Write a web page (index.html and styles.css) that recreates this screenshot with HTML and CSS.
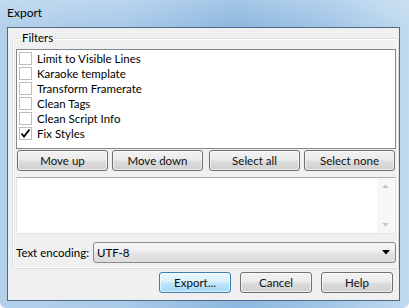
FILE: index.html
```html
<!DOCTYPE html>
<html>
<head>
    <title>Export</title>
    <link rel="stylesheet" href="styles.css">
</head>
<body>
    <div class="window">
        <div class="titlebar">Export</div>
        <div class="client">
            <fieldset class="filters">
                <legend>Filters</legend>
                <ul class="checklist">
                    <li><span class="check"></span>Limit to Visible Lines</li>
                    <li><span class="check"></span>Karaoke template</li>
                    <li><span class="check"></span>Transform Framerate</li>
                    <li><span class="check"></span>Clean Tags</li>
                    <li><span class="check"></span>Clean Script Info</li>
                    <li><span class="check"><svg width="11" height="11" viewBox="0 0 11 11"><path d="M1.5 5.5 L4 8.5 L9.5 1.5" fill="none" stroke="#000" stroke-width="1.8"/></svg></span>Fix Styles</li>
                </ul>
                <div class="button-row">
                    <div class="pair">
                        <button class="btn">Move up</button>
                        <button class="btn">Move down</button>
                    </div>
                    <div class="pair">
                        <button class="btn">Select all</button>
                        <button class="btn">Select none</button>
                    </div>
                </div>
                <div class="info-box">
                    <div class="info-text"></div>
                    <div class="scrollbar">
                        <svg width="17" height="17" viewBox="0 0 17 17"><path d="M5 10 L8.5 6.5 L12 10 Z" fill="#c4c4c4"/></svg>
                        <svg width="17" height="17" viewBox="0 0 17 17"><path d="M5 7 L8.5 10.5 L12 7 Z" fill="#c4c4c4"/></svg>
                    </div>
                </div>
                <div class="encoding-row">
                    <label class="encoding-label">Text encoding:</label>
                    <div class="combo">
                        <span>UTF-8</span>
                        <svg width="8" height="5" viewBox="0 0 8 5"><path d="M0 0 L8 0 L4 4.5 Z" fill="#000"/></svg>
                    </div>
                </div>
            </fieldset>
            <div class="dialog-buttons">
                <button class="btn default">Export...</button>
                <button class="btn">Cancel</button>
                <button class="btn">Help</button>
            </div>
        </div>
    </div>
</body>
</html>
```

FILE: styles.css
```css
body { margin: 0; font-family: Lato, "Noto Sans", sans-serif; font-size: 11.5px; color: #000; }

/* window frame (aero glass) */
.window { width: 409px; height: 308px; box-sizing: border-box; padding: 0 9px 7px 7px; display: flex; flex-direction: column;
    border-radius: 0 0 6px 6px;
    background:
        linear-gradient(180deg, rgba(255,255,255,0.2) 0, rgba(255,255,255,0) 26px),
        linear-gradient(90deg, #b4d1eb 0%, #a9cae9 30%, #8db8df 58%, #a2c6e7 80%, #c0daef 100%); }
.titlebar { height: 27px; line-height: 26px; font-size: 12px; flex: none; }
.client { flex: 1; background: #f0f0f0; border: 1px solid #4e6985; display: flex; flex-direction: column; padding: 2px 0 5px 4px; }

/* group box */
.filters { margin: 0; padding: 3px 2px 5px 3px; min-inline-size: 0; border: 1px solid #d5dfe5; border-radius: 3px; box-shadow: inset 0 0 0 1px #fff; }
.filters legend { padding: 0 2px; margin-left: 4px; line-height: 16px; }

.checklist { list-style: none; margin: 0; padding: 1px 0 0 0; height: 97px; background: #fff; border: 1px solid #828790; }
.checklist li { height: 15px; line-height: 15px; display: flex; align-items: center; white-space: nowrap; }
.check { width: 11px; height: 11px; border: 1px solid #bdbdbd; background: #fff; margin: 0 5px 0 2px; display: flex; align-items: center; justify-content: center; }

.btn { height: 21px; padding: 0; font: inherit; font-weight: normal; color: #111; border: 1px solid #707070; border-radius: 3px;
    background: linear-gradient(#f2f2f2 0%, #ebebeb 48%, #dddddd 52%, #cfcfcf 100%); box-shadow: inset 0 0 0 1px rgba(255,255,255,0.6); }
.btn.default { border-color: #3c7fb1; background: linear-gradient(#eaf6fd 0%, #d9f0fc 48%, #bee6fd 52%, #a7d9f5 100%); }

.button-row { display: flex; gap: 6px; margin: 1px 1px 0 1px; }
.pair { flex: 1; display: flex; gap: 4px; }
.pair .btn { flex: 1; }

.info-box { display: flex; margin-top: 6px; height: 55px; background: #fff; border: 1px solid #e2e3ea; border-top-color: #abadb3; }
.info-text { flex: 1; }
.scrollbar { width: 17px; margin-right: 1px; background: #f7f7f7; display: flex; flex-direction: column; justify-content: space-between; }

.encoding-row { display: flex; align-items: center; margin-top: 8px; }
.encoding-label { flex: 0 0 77px; }
.combo { flex: 1; height: 19px; border: 1px solid #8a8a8a; border-radius: 3px; padding: 0 5px 0 3px; display: flex; align-items: center; justify-content: space-between;
    background: linear-gradient(#f6f6f6 0%, #eeeeee 48%, #e3e3e3 52%, #dcdcdc 100%); }

.dialog-buttons { display: flex; justify-content: flex-end; gap: 9px; margin: 3px 6px 0 0; }
.dialog-buttons .btn { width: 72px; }
```
